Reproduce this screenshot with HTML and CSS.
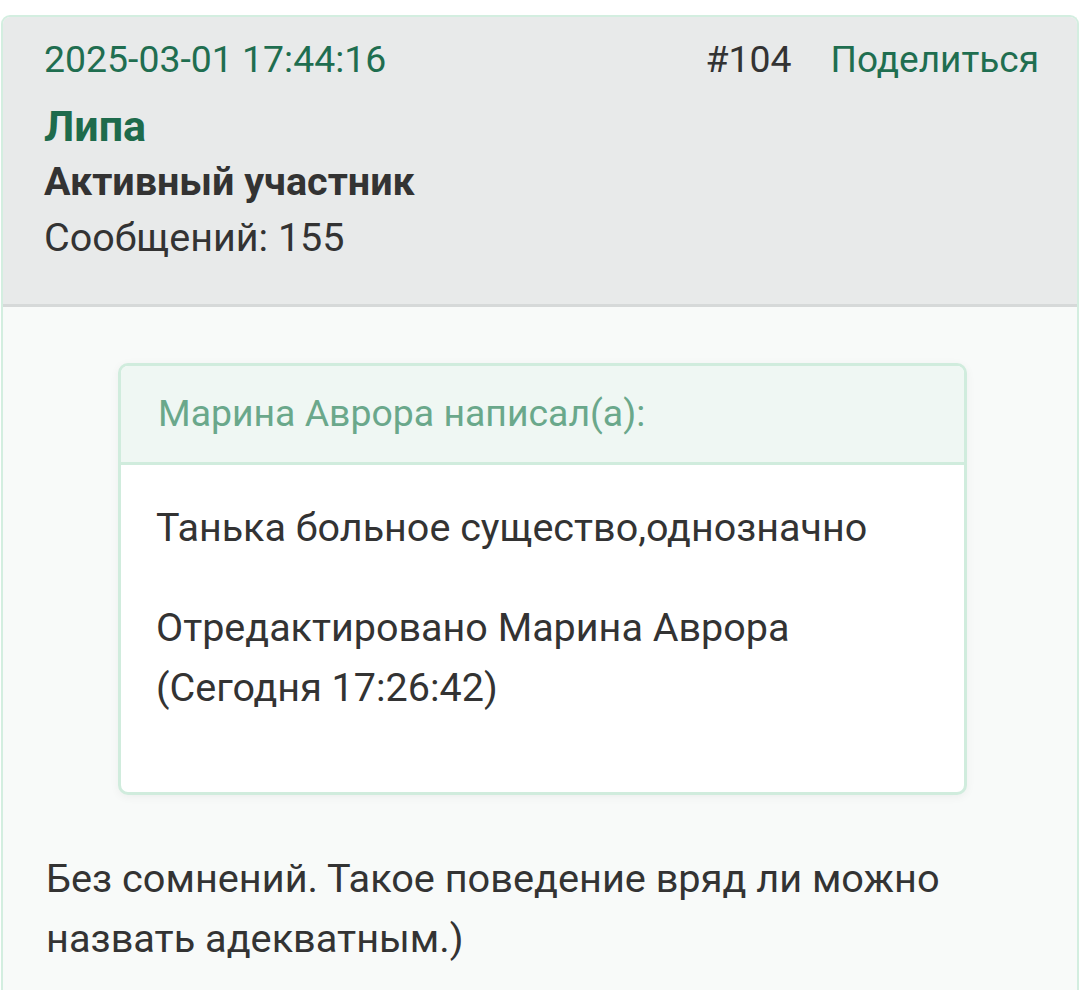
FILE: index.html
```html
<!DOCTYPE html>
<html lang="ru">
<head>
<meta charset="UTF-8" />
<title>Сообщение #104</title>
<link rel="stylesheet" href="styles.css">
</head>
<body>

<div class="post">
  <div class="post-head">
    <div class="meta">
      <span class="date">2025-03-01 17:44:16</span>
      <span class="num">#104</span>
      <a class="share" href="#">Поделиться</a>
    </div>
    <div class="author">Липа</div>
    <div class="role">Активный участник</div>
    <div class="count">Сообщений: 155</div>
  </div>

  <div class="post-body">
    <div class="quote">
      <div class="quote-head">Марина Аврора написал(а):</div>
      <div class="quote-text">
        <p>Танька больное существо,однозначно</p>
        <p>Отредактировано Марина Аврора<br>(Сегодня 17:26:42)</p>
      </div>
    </div>
    <p class="text">Без сомнений. Такое поведение вряд ли можно<br>назвать адекватным.)</p>
  </div>
</div>

</body>
</html>
```

FILE: styles.css
```css
body {
  margin: 0;
  background: #fff;
  color: #333;
  font-family: Roboto, "Noto Sans", sans-serif;
  font-size: 39.5px;
}
.post {
  margin: 15px 1px 0 1px;
  border: 2px solid #d3eee0;
  border-bottom: none;
  border-radius: 9px 9px 0 0;
  overflow: hidden;
  background: #f8faf9;
}
.post-head {
  background: #e8eaea;
  border-bottom: 3px solid #d6d9d9;
  padding: 16px 38px 38px 41px;
}
.meta {
  display: flex;
  align-items: baseline;
  font-size: 37.4px;
  line-height: 52px;
}
.date {
  color: #1f6e50;
  flex: 1;
}
.num {
  color: #333;
}
.share {
  color: #1f6e50;
  text-decoration: none;
  margin-left: 39px;
  font-size: 37px;
}
.author {
  margin-top: 12px;
  color: #1e6b4c;
  font-weight: bold;
  font-size: 43px;
  line-height: 56px;
}
.role {
  font-weight: bold;
  line-height: 56px;
}
.count {
  line-height: 56px;
}
.post-body {
  padding: 56px 110px 30px 43px;
  line-height: 60px;
}
.quote {
  margin-left: 72px;
  border: 3px solid #d0ecdd;
  border-radius: 10px;
  background: #fff;
  overflow: hidden;
  box-shadow: 0 2px 10px rgba(0, 0, 0, 0.05);
}
.quote-head {
  background: #eff7f3;
  border-bottom: 3px solid #d0ecdd;
  color: #6aa88b;
  font-size: 37.4px;
  line-height: 59px;
  padding: 18px 36px 19px 37px;
}
.quote-text {
  padding: 33px 36px 34px 35px;
}
.quote-text p {
  margin: 0 0 40px;
}
.text {
  margin: 54px -70px 0 0;
  font-size: 39.7px;
}
```
